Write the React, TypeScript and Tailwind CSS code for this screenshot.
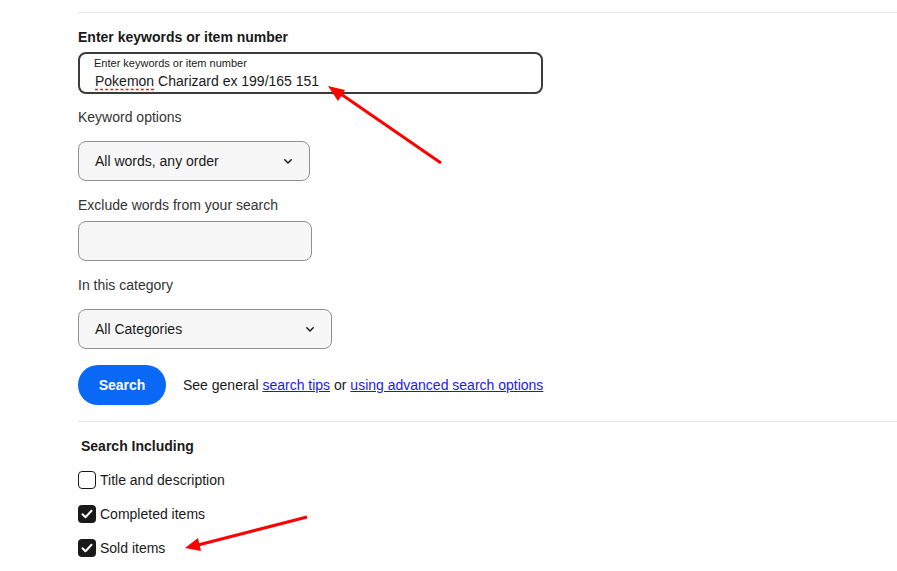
import React from "react";

function Chevron() {
  return (
    <svg width="8" height="5" viewBox="0 0 8 5" fill="none" className="shrink-0">
      <path d="M0.8 0.8l3.2 3.2 3.2-3.2" stroke="#191919" strokeWidth="1.5" strokeLinecap="round" strokeLinejoin="round" />
    </svg>
  );
}

function Select({ label, width }: { label: string; width: string }) {
  return (
    <div
      className={`mt-[14px] h-[40px] ${width} flex items-center justify-between pl-[16px] pr-[17px] rounded-[8px] border border-[#8f8f8f] bg-[#f7f7f7] text-[14px] text-[#191919]`}
    >
      <span>{label}</span>
      <Chevron />
    </div>
  );
}

function Checkbox({ checked, label }: { checked: boolean; label: string }) {
  return (
    <div className="mt-[14px] h-[20px] flex items-center gap-[4px] text-[14px] text-[#191919]">
      <div
        className={`w-[18px] h-[18px] rounded-[4px] flex items-center justify-center ${
          checked ? "bg-[#191919]" : "border-[1.5px] border-[#191919] bg-white"
        }`}
      >
        {checked && (
          <svg width="12" height="10" viewBox="0 0 12 10" fill="none">
            <path d="M1.5 5.2l3 3L10.5 1.8" stroke="white" strokeWidth="2" strokeLinecap="round" strokeLinejoin="round" />
          </svg>
        )}
      </div>
      <span>{label}</span>
    </div>
  );
}

export default function App() {
  return (
    <div className="relative w-[897px] h-[571px] bg-white overflow-hidden font-['Liberation_Sans',Arial,sans-serif] text-[#191919]">
      <div className="pt-[12px] ml-[78px]">
        <div className="border-t border-[#e5e5e5]" />

        <div className="mt-[14px] h-[20px] leading-[20px] text-[14px] font-bold">Enter keywords or item number</div>
        <div className="mt-[5px] h-[42px] w-[465px] rounded-[8px] border-2 border-[#3b3b3b] pl-[14px] flex flex-col justify-center">
          <div className="text-[11px] leading-[12px] text-[#191919]">Enter keywords or item number</div>
          <div className="mt-[4px] text-[14px] leading-[16px] pl-[1px]">
            <span className="underline decoration-dashed decoration-[#e0201c] underline-offset-[3px]">Pokemon</span>{" "}
            Charizard ex 199/165 151
          </div>
        </div>

        <div className="mt-[13px] h-[20px] leading-[20px] text-[14px] text-[#333]">Keyword options</div>
        <Select label="All words, any order" width="w-[232px]" />

        <div className="mt-[14px] h-[20px] leading-[20px] text-[14px] text-[#333]">Exclude words from your search</div>
        <div className="mt-[6px] h-[40px] w-[234px] rounded-[8px] border border-[#8f8f8f] bg-[#f7f7f7]" />

        <div className="mt-[14px] h-[20px] leading-[20px] text-[14px] text-[#333]">In this category</div>
        <Select label="All Categories" width="w-[254px]" />

        <div className="mt-[16px] flex items-center">
          <button className="h-[40px] w-[88px] rounded-full bg-[#0968f6] text-white text-[14px] font-bold">Search</button>
          <div className="ml-[17px] text-[14px] text-[#191919]">
            See general{" "}
            <a className="underline text-[#1a1ae6]" href="#">search tips</a> or{" "}
            <a className="underline text-[#1a1ae6]" href="#">using advanced search options</a>
          </div>
        </div>

        <div className="mt-[16px] border-t border-[#e5e5e5]" />

        <div className="mt-[14px] ml-[3px] h-[20px] leading-[20px] text-[14px] font-bold">Search Including</div>
        <Checkbox checked={false} label="Title and description" />
        <Checkbox checked={true} label="Completed items" />
        <Checkbox checked={true} label="Sold items" />
      </div>

      <svg className="absolute inset-0 pointer-events-none" width="897" height="571">
        <line x1="441" y1="163" x2="338" y2="92" stroke="#ff0000" strokeWidth="3" />
        <polygon points="328,86 345,90 338,101" fill="#ff0000" />
        <line x1="307" y1="517" x2="198" y2="545" stroke="#ff0000" strokeWidth="3" />
        <polygon points="185,548 198,538 201,551" fill="#ff0000" />
      </svg>
    </div>
  );
}
